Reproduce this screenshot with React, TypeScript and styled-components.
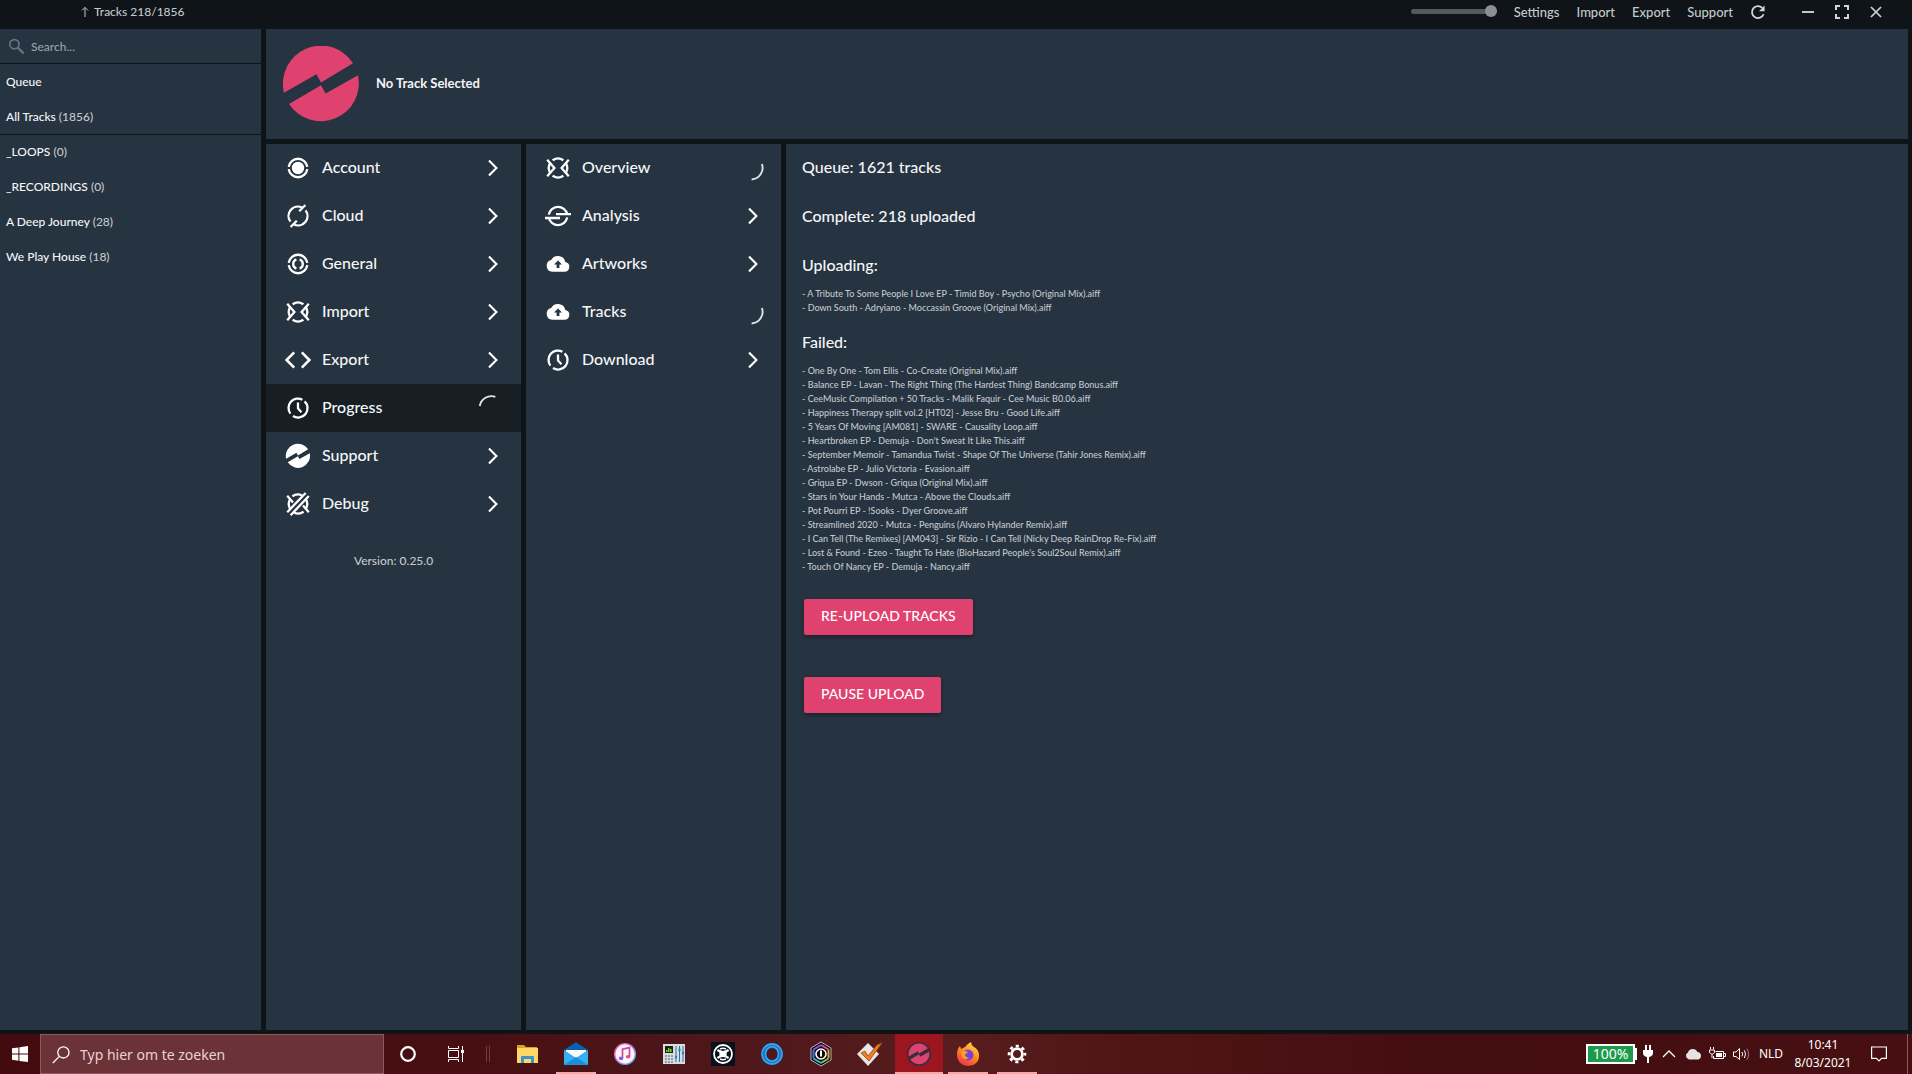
import React from "react";
import styled, { createGlobalStyle, css } from "styled-components";

const color = {
  shell: "#0f1418",
  panel: "#263340",
  active: "#171e24",
  pink: "#df426f",
  text: "#f4f6f8",
  soft: "#c3c8cc",
  muted: "#9aa3aa",
};

const GlobalStyle = createGlobalStyle`
  * { box-sizing: border-box; }
  html, body, #root { height: 100%; }
  body {
    margin: 0;
    background: ${color.shell};
    color: ${color.text};
    font-family: Lato, "Open Sans", sans-serif;
    font-weight: 500;
    overflow: hidden;
  }
  button, input { font-family: inherit; font-weight: inherit; color: inherit; }
  button { border: 0; padding: 0; background: none; }
  ul { list-style: none; margin: 0; padding: 0; }
  h1, h2, p { margin: 0; }
  svg { display: block; flex: none; }
`;

/* ---------- shell ---------- */

const Desktop = styled.div`
  display: flex;
  flex-direction: column;
  height: 100vh;
`;

const TitleBar = styled.header`
  display: flex;
  align-items: center;
  height: 29px;
  flex: none;
  padding: 0 27px 6px 81px;
  color: ${color.soft};
`;

const UploadStatus = styled.p`
  display: flex;
  align-items: center;
  gap: 5px;
  flex: 1;
  font-size: 12px;
  line-height: 16px;
`;

const Volume = styled.input`
  appearance: none;
  width: 86px;
  height: 12px;
  margin: 0 17px 0 0;
  background: transparent;
  &::-webkit-slider-runnable-track {
    height: 5px;
    border-radius: 3px;
    background: #55595d;
  }
  &::-webkit-slider-thumb {
    appearance: none;
    width: 12px;
    height: 12px;
    margin-top: -4px;
    border-radius: 50%;
    background: #8d8f94;
  }
`;

const TopNav = styled.nav`
  display: flex;
  gap: 17px;
  margin-right: 16px;
`;

const TopLink = styled.a`
  color: inherit;
  text-decoration: none;
  font-size: 13px;
  line-height: 18px;
`;

const WindowButtons = styled.div`
  display: flex;
  gap: 16px;
  margin-left: 32px;
`;

const TitleButton = styled.button`
  display: grid;
  place-items: center;
  width: 18px;
  height: 18px;
`;

const Workspace = styled.div`
  display: grid;
  grid-template-columns: 261px minmax(0, 1fr);
  gap: 5px;
  flex: 1;
  min-height: 0;
  padding: 0 4px 4px 0;
`;

/* ---------- sidebar ---------- */

const Sidebar = styled.aside`
  background: ${color.panel};
`;

const SearchRow = styled.label`
  display: flex;
  align-items: center;
  gap: 6px;
  height: 35px;
  padding: 1px 8px 0;
  border-bottom: 1px solid ${color.shell};
`;

const SearchInput = styled.input`
  flex: 1;
  min-width: 0;
  border: 0;
  padding: 0;
  outline: 0;
  background: transparent;
  font-size: 12px;
  line-height: 16px;
  &::placeholder { color: ${color.muted}; opacity: 1; }
`;

const PlaylistGroup = styled.ul`
  & + & { box-shadow: inset 0 1px 0 ${color.shell}; }
`;

const Playlist = styled.button`
  display: block;
  width: 100%;
  height: 35px;
  padding: 0 6px;
  text-align: left;
  font-size: 12px;
  line-height: 35px;
`;

const Count = styled.span`
  color: ${color.soft};
`;

/* ---------- main area ---------- */

const Main = styled.main`
  display: grid;
  grid-template-rows: 110px minmax(0, 1fr);
  gap: 5px;
  min-height: 0;
`;

const Player = styled.section`
  display: flex;
  align-items: center;
  gap: 17px;
  padding: 0 17px;
  background: ${color.panel};
`;

const TrackTitle = styled.h1`
  padding-bottom: 2px;
  font-size: 13px;
  line-height: 18px;
  font-weight: 700;
`;

const Columns = styled.div`
  display: grid;
  grid-template-columns: 255px 255px minmax(0, 1fr);
  gap: 5px;
  min-height: 0;
`;

const MenuColumn = styled.nav`
  background: ${color.panel};
`;

const MenuItem = styled.button<{ $active?: boolean }>`
  display: flex;
  align-items: center;
  width: 100%;
  height: 48px;
  padding: 0 17px 0 19px;
  text-align: left;
  font-size: 16px;
  line-height: 24px;
  ${(p) => p.$active && css`background: ${color.active};`}
`;

const MenuLabel = styled.span`
  flex: 1;
  padding: 0 0 2px 11px;
`;

const Version = styled.p`
  padding-top: 25px;
  text-align: center;
  font-size: 12px;
  line-height: 16px;
  color: ${color.soft};
`;

const Detail = styled.section`
  display: flex;
  flex-direction: column;
  align-items: flex-start;
  padding: 11px 16px;
  background: ${color.panel};
`;

const Heading = styled.h2`
  font-size: 16px;
  line-height: 24px;
  font-weight: 500;
  & + & { margin-top: 25px; }
`;

const FileList = styled.ul`
  margin: 10px 0 15px;
  font-size: 9px;
  line-height: 14px;
  color: ${color.soft};
`;

const ActionButton = styled.button`
  height: 36px;
  margin: 10px 2px 32px;
  padding: 0 17px 2px;
  border-radius: 2px;
  background: ${color.pink};
  color: #fff;
  font-size: 14px;
  line-height: 20px;
  text-transform: uppercase;
  box-shadow: 0 2px 4px rgba(0, 0, 0, 0.35);
`;

/* ---------- taskbar ---------- */

const Taskbar = styled.footer`
  display: flex;
  align-items: center;
  height: 40px;
  flex: none;
  color: #fff;
  font-family: "Noto Sans", "Open Sans", sans-serif;
  font-weight: 400;
  background: linear-gradient(90deg, #430b0d 0%, #470f11 24%, #4e1719 38%, #571d1f 50%, #511517 58%, #430e10 75%, #470f11 100%);
`;

const TaskSearch = styled.label`
  display: flex;
  align-items: center;
  gap: 10px;
  width: 344px;
  height: 40px;
  padding: 1px 11px 0;
  border: 1px solid #8c5b5e;
  background: #6b3237;
`;

const TaskSearchInput = styled.input`
  flex: 1;
  min-width: 0;
  padding: 0;
  border: 0;
  outline: 0;
  background: transparent;
  font-size: 14px;
  line-height: 20px;
  &::placeholder { color: #e9d2d3; opacity: 1; }
`;

const TaskButton = styled.button<{ $width?: number; $open?: boolean; $current?: boolean }>`
  display: grid;
  place-items: center;
  width: ${(p) => p.$width ?? 48}px;
  height: 40px;
  ${(p) => p.$open && css`
    background: linear-gradient(#fca5a8, #fca5a8) center bottom / 40px 2px no-repeat;
  `}
  ${(p) => p.$current && css`
    background: linear-gradient(#fca5a8, #fca5a8) center bottom / 48px 2px no-repeat, #9c1620;
  `}
`;

const Divider = styled.span`
  width: 4px;
  height: 16px;
  margin: 0 13px 0 6px;
  border: solid #6d3f41;
  border-width: 0 1px;
`;

const Apps = styled.div`
  display: flex;
  flex: 1;
  gap: 1px;
`;

const Battery = styled.span`
  display: grid;
  place-items: center;
  width: 49px;
  height: 20px;
  border: 2px solid #fff;
  background: #1d9a4b;
  font-size: 14px;
  line-height: 16px;
`;

const BatteryTip = styled.span`
  width: 2px;
  height: 12px;
  margin-right: 6px;
  background: #fff;
`;

const Tray = styled.div`
  display: flex;
  align-items: center;
  gap: 7px;
  margin-right: 2px;
`;

const Language = styled.button`
  width: 28px;
  font-size: 12px;
  line-height: 16px;
`;

const Clock = styled.time`
  width: 72px;
  font-size: 12px;
  line-height: 18px;
  text-align: center;
`;

const Notifications = styled(TaskButton)`
  margin: 0 4px 0 -4px;
`;

const ShowDesktop = styled.button`
  width: 5px;
  height: 40px;
  border-left: 1px solid #8c5b5e;
`;

/* ---------- drawings ---------- */

const Logo = ({ size, fill }: { size: number; fill: string }) => (
  <svg width={size} height={size} viewBox="0 0 76 76" fill={fill} aria-hidden="true">
    <path d="M70 17.3 38 36.5 33.4 28.3 1 46.7A38 38 0 0 1 70 17.3Z" />
    <path d="M75 29.3 42.6 47.5 38 39.2 6 58A38 38 0 0 0 75 29.3Z" />
  </svg>
);

const Glyph = ({ children, size = 26 }: { children: React.ReactNode; size?: number }) => (
  <svg
    width={size}
    height={size}
    viewBox="0 0 26 26"
    fill="none"
    stroke="#fff"
    strokeWidth="2.3"
    aria-hidden="true"
  >
    {children}
  </svg>
);

const splitRing = "M3.7 11.8A9.4 9.4 0 0 1 22.3 11.8M3.7 14.2A9.4 9.4 0 0 0 22.3 14.2";
const crossed = (
  <>
    <path d="M7.6 5.2A9.4 9.4 0 0 1 18.4 5.2M7.6 20.8A9.4 9.4 0 0 0 18.4 20.8" />
    <path d="M2.2 4.8 9.4 13 2.2 21.2M23.8 4.8 16.6 13 23.8 21.2" />
    <path d="M5 8.4A9.4 9.4 0 0 0 5 17.6M21 8.4A9.4 9.4 0 0 1 21 17.6" />
  </>
);

const glyphs = {
  account: (
    <Glyph>
      <path d={splitRing} />
      <circle cx="13" cy="13" r="6.2" fill="#fff" stroke="none" />
    </Glyph>
  ),
  cloud: (
    <Glyph>
      <path d="M5.4 18.6A9.4 9.4 0 0 1 17 4.5M9 21.5A9.4 9.4 0 0 0 20.6 7.4" />
      <path d="M20.4 2 14.2 8.2M5.6 24 11.8 17.8" />
    </Glyph>
  ),
  general: (
    <Glyph>
      <path d={splitRing} />
      <path d="M11.4 8.4A4.9 4.9 0 0 0 11.4 17.6M14.6 8.4A4.9 4.9 0 0 1 14.6 17.6" />
    </Glyph>
  ),
  exchange: <Glyph>{crossed}</Glyph>,
  code: (
    <Glyph>
      <path d="M9.2 5.4 1.6 13 9.2 20.6M16.8 5.4 24.4 13 16.8 20.6" strokeWidth="2.5" />
    </Glyph>
  ),
  clock: (
    <Glyph>
      <path d="M5.4 18.6A9.4 9.4 0 0 1 17.4 4.7M19.6 6.3A9.4 9.4 0 0 1 8 21" />
      <path d="M13 7.4V13.4L16.4 17.2" />
    </Glyph>
  ),
  support: (
    <Glyph>
      <g transform="translate(.8 .8) scale(.32)" fill="#fff" stroke="none">
        <path d="M70 17.3 38 36.5 33.4 28.3 1 46.7A38 38 0 0 1 70 17.3Z" />
        <path d="M75 29.3 42.6 47.5 38 39.2 6 58A38 38 0 0 0 75 29.3Z" />
      </g>
    </Glyph>
  ),
  debug: (
    <Glyph>
      <path d="M7.4 5.2A9.4 9.4 0 0 1 17 4.5M9 21.5A9.4 9.4 0 0 0 18.6 20.8" />
      <path d="M5 8.4A9.4 9.4 0 0 0 5 17.6M21 8.4A9.4 9.4 0 0 1 21 17.6" />
      <path d="M2.2 4.8 8 11.4M2.2 21.2 20.6 2M5.6 24.2 23.8 5M18 14.6 23.8 21.2" />
    </Glyph>
  ),
  analysis: (
    <Glyph>
      <path d="M3.8 11.6A9.4 9.4 0 0 1 22.2 11.2M22.2 14.4A9.4 9.4 0 0 1 3.8 14.8" />
      <path d="M11 11.2H26M0 15H15" />
    </Glyph>
  ),
  upload: (
    <Glyph>
      <path
        d="M20.3 10.9A7.6 7.6 0 0 0 6.2 9 6 6 0 0 0 7.2 20.8H19.4A5 5 0 0 0 20.3 10.9Z"
        fill="#fff"
        stroke="none"
      />
      <path d="M13 9.4 17 13.6H14.4V17H11.6V13.6H9Z" fill={color.panel} stroke="none" />
    </Glyph>
  ),
};

const Chevron = () => (
  <svg width="26" height="26" viewBox="0 0 26 26" fill="none" stroke="#fff" strokeWidth="2.1" aria-hidden="true">
    <path d="M11 5.4 18.4 13 11 20.6" />
  </svg>
);

const Spinner = ({ turned }: { turned?: boolean }) => (
  <svg width="26" height="26" viewBox="0 0 26 26" fill="none" stroke="#dfe3e6" strokeWidth="1.9" aria-hidden="true">
    <path d={turned ? "M23.9 9A11.6 11.6 0 0 1 13.6 24.5" : "M1.8 11A11.6 11.6 0 0 1 17.4 1.9"} />
  </svg>
);

const SearchIcon = () => (
  <svg width="17" height="17" viewBox="0 0 17 17" fill="none" stroke="#6c747b" aria-hidden="true">
    <circle cx="6.4" cy="6.2" r="4.6" strokeWidth="1.7" />
    <path d="M9.8 9.6 15.6 15.4" strokeWidth="2.2" />
  </svg>
);

/* ---------- taskbar icons ---------- */

const taskIcons = {
  explorer: (
    <svg width="24" height="24" viewBox="0 0 24 24">
      <path d="M2 3H9L11 5H22V9H2Z" fill="#e0a11f" />
      <path d="M2 6H23V21H2Z" fill="#ffd767" />
      <path d="M6 21V15Q6 14 7 14H18Q19 14 19 15V21H16V17H9V21Z" fill="#3f93cc" />
    </svg>
  ),
  mail: (
    <svg width="24" height="26" viewBox="0 0 24 26">
      <path d="M0 9 12 1 24 9V13H0Z" fill="#0b5fb0" />
      <path d="M2 9H22V17H2Z" fill="#f6f9fc" />
      <path d="M0 9 12 17 24 9V24H0Z" fill="#35b2ee" />
      <path d="M0 24 12 16 24 24Z" fill="#1e8ddb" />
    </svg>
  ),
  music: (
    <svg width="24" height="24" viewBox="0 0 24 24">
      <defs>
        <linearGradient id="ring" x1="0" y1="0" x2="1" y2="1">
          <stop offset="0" stopColor="#f5589b" />
          <stop offset="0.5" stopColor="#b56bdc" />
          <stop offset="1" stopColor="#4bb8f0" />
        </linearGradient>
      </defs>
      <circle cx="12" cy="12" r="10.4" fill="#faf5fb" stroke="url(#ring)" strokeWidth="1.4" />
      <path d="M9.5 16.2V7.2L16.5 5.6V14.6" fill="none" stroke="#d0469f" strokeWidth="1.7" />
      <ellipse cx="8" cy="16.4" rx="2.2" ry="1.8" fill="#8a5be0" />
      <ellipse cx="15" cy="14.8" rx="2.2" ry="1.8" fill="#ee4b86" />
    </svg>
  ),
  mixer: (
    <svg width="24" height="24" viewBox="0 0 24 24">
      <path d="M1 2H23V22H1Z" fill="#d7dde2" />
      <path d="M3 4H11V11H3Z" fill="#17240f" />
      <path d="M4 10V8H5.5V10M6 10V6H7.5V10M8 10V7H9.5V10" fill="#7ed321" />
      <path d="M3 14H11M3 17H11M3 20H11" stroke="#7c8890" strokeWidth="1.6" strokeDasharray="2 1" />
      <path d="M14 4V20M17.5 4V20M21 4V20" stroke="#2f6f9e" />
      <path d="M13 15H15M16.5 8H18.5M20 11H22" stroke="#1583c6" strokeWidth="2.6" />
    </svg>
  ),
  deck: (
    <svg width="24" height="24" viewBox="0 0 24 24">
      <path d="M0 0H24V24H0Z" fill="#07101d" />
      <g fill="none" stroke="#fff">
        <circle cx="12" cy="12" r="9" strokeWidth="1.8" />
        <path d="M6.4 8Q12 12 17.6 8M6.4 16Q12 12 17.6 16" strokeWidth="2.2" />
        <path d="M9 7Q12 5.6 15 7M9 17Q12 18.4 15 17" strokeWidth="1.4" />
      </g>
      <path d="M8.4 9.6H15.6V14.4H8.4Z" fill="#fff" />
    </svg>
  ),
  ring: (
    <svg width="24" height="24" viewBox="0 0 24 24" fill="none">
      <ellipse cx="12" cy="12" rx="8.4" ry="8.6" stroke="#1877c9" strokeWidth="5" />
      <circle cx="12" cy="12" r="10" stroke="#38a8f2" strokeWidth="1.4" />
      <ellipse cx="12" cy="12" rx="6.4" ry="7.4" stroke="#3db0f5" strokeWidth="1.2" />
    </svg>
  ),
  hex: (
    <svg width="24" height="26" viewBox="0 0 24 26" fill="none">
      <path d="M12 1 22 7V19L12 25 2 19V7Z" fill="#0b0b0e" stroke="#b9b9bd" />
      <path d="M12 4 19.5 8.5" stroke="#e9489c" strokeWidth="2" />
      <path d="M19.5 8.5V17.5" stroke="#f1a32b" strokeWidth="2" />
      <path d="M19.5 17.5 12 22" stroke="#7ccf43" strokeWidth="2" />
      <path d="M12 22 4.5 17.5" stroke="#2cc1c9" strokeWidth="2" />
      <path d="M4.5 17.5V8.5" stroke="#3c72e6" strokeWidth="2" />
      <path d="M4.5 8.5 12 4" stroke="#a34be0" strokeWidth="2" />
      <circle cx="12" cy="13" r="5" fill="#0b0b0e" stroke="#fff" strokeWidth="1.6" />
      <path d="M12 9.6V15.6" stroke="#fff" strokeWidth="2" />
    </svg>
  ),
  check: (
    <svg width="26" height="26" viewBox="0 0 26 26">
      <path d="M11 2 22 13 11 25 0 13Z" fill="#e4e6e8" />
      <path d="M4 12 8 10 11 15 20 4 25 2 12 20Z" fill="#f07d1c" stroke="#a8440d" strokeWidth="0.8" />
    </svg>
  ),
  logo: (
    <svg width="24" height="24" viewBox="0 0 76 76">
      <circle cx="38" cy="38" r="38" fill="#3b2c3b" />
      <g fill="#dc4370" transform="translate(5 5) scale(.87)">
        <path d="M70 17.3 38 36.5 33.4 28.3 1 46.7A38 38 0 0 1 70 17.3Z" />
        <path d="M75 29.3 42.6 47.5 38 39.2 6 58A38 38 0 0 0 75 29.3Z" />
      </g>
    </svg>
  ),
  fox: (
    <svg width="24" height="26" viewBox="0 0 24 26">
      <defs>
        <linearGradient id="flame" x1="0.8" y1="0" x2="0.3" y2="1">
          <stop offset="0" stopColor="#ffe14a" />
          <stop offset="0.5" stopColor="#ff8a1e" />
          <stop offset="1" stopColor="#f0304f" />
        </linearGradient>
      </defs>
      <path
        d="M15 1Q15 4 18 6 22 8 23 13 24 24 12 25 1 24 1 13 1 8 4 5L5 8 9 6Q11 3 15 1Z"
        fill="url(#flame)"
      />
      <circle cx="12" cy="14" r="5.4" fill="#7542d5" />
      <path d="M5 11Q8 9 12 11 11 13 9 13 9 16 13 17 9 20 6 16Z" fill="#ff9a22" />
    </svg>
  ),
  gear: (
    <svg width="20" height="20" viewBox="0 0 20 20" fill="none" stroke="#fff">
      <circle cx="10" cy="10" r="5.4" strokeWidth="2.8" />
      <circle cx="10" cy="10" r="8" strokeWidth="2.6" strokeDasharray="3.14 3.14" strokeDashoffset="1.5" />
    </svg>
  ),
};

type GlyphName = keyof typeof glyphs;
type Entry = { label: string; icon: GlyphName; busy?: boolean; active?: boolean };

const settingsMenu: Entry[] = [
  { label: "Account", icon: "account" },
  { label: "Cloud", icon: "cloud" },
  { label: "General", icon: "general" },
  { label: "Import", icon: "exchange" },
  { label: "Export", icon: "code" },
  { label: "Progress", icon: "clock", busy: true, active: true },
  { label: "Support", icon: "support" },
  { label: "Debug", icon: "debug" },
];

const progressMenu: Entry[] = [
  { label: "Overview", icon: "exchange", busy: true },
  { label: "Analysis", icon: "analysis" },
  { label: "Artworks", icon: "upload" },
  { label: "Tracks", icon: "upload", busy: true },
  { label: "Download", icon: "clock" },
];

const library = [{ name: "Queue" }, { name: "All Tracks", count: 1856 }];
const playlists = [
  { name: "_LOOPS", count: 0 },
  { name: "_RECORDINGS", count: 0 },
  { name: "A Deep Journey", count: 28 },
  { name: "We Play House", count: 18 },
];

const uploading = [
  "A Tribute To Some People I Love EP - Timid Boy - Psycho (Original Mix).aiff",
  "Down South - Adryiano - Moccassin Groove (Original Mix).aiff",
];

const failed = [
  "One By One - Tom Ellis - Co-Create (Original Mix).aiff",
  "Balance EP - Lavan - The Right Thing (The Hardest Thing) Bandcamp Bonus.aiff",
  "CeeMusic Compilation + 50 Tracks - Malik Faquir - Cee Music B0.06.aiff",
  "Happiness Therapy split vol.2 [HT02] - Jesse Bru - Good Life.aiff",
  "5 Years Of Moving [AM081] - SWARE - Causality Loop.aiff",
  "Heartbroken EP - Demuja - Don't Sweat It Like This.aiff",
  "September Memoir - Tamandua Twist - Shape Of The Universe (Tahir Jones Remix).aiff",
  "Astrolabe EP - Julio Victoria - Evasion.aiff",
  "Griqua EP - Dwson - Griqua (Original Mix).aiff",
  "Stars in Your Hands - Mutca - Above the Clouds.aiff",
  "Pot Pourri EP - !Sooks - Dyer Groove.aiff",
  "Streamlined 2020 - Mutca - Penguins (Alvaro Hylander Remix).aiff",
  "I Can Tell (The Remixes) [AM043] - Sir Rizio - I Can Tell (Nicky Deep RainDrop Re-Fix).aiff",
  "Lost & Found - Ezeo - Taught To Hate (BioHazard People's Soul2Soul Remix).aiff",
  "Touch Of Nancy EP - Demuja - Nancy.aiff",
];

const apps: { icon: keyof typeof taskIcons; label: string; open?: boolean; current?: boolean }[] = [
  { icon: "explorer", label: "File Explorer" },
  { icon: "mail", label: "Mail", open: true },
  { icon: "music", label: "iTunes" },
  { icon: "mixer", label: "Mixer" },
  { icon: "deck", label: "Traktor" },
  { icon: "ring", label: "Rekordbox" },
  { icon: "hex", label: "Mixed In Key" },
  { icon: "check", label: "Tasks" },
  { icon: "logo", label: "Music library", current: true },
  { icon: "fox", label: "Firefox", open: true },
  { icon: "gear", label: "Settings", open: true },
];

const Menu = ({ items, turned }: { items: Entry[]; turned?: boolean }) => (
  <>
    {items.map((item) => (
      <MenuItem key={item.label} $active={item.active}>
        {glyphs[item.icon]}
        <MenuLabel>{item.label}</MenuLabel>
        {item.busy ? <Spinner turned={turned} /> : <Chevron />}
      </MenuItem>
    ))}
  </>
);

const Playlists = ({ items }: { items: { name: string; count?: number }[] }) => (
  <PlaylistGroup>
    {items.map((item) => (
      <li key={item.name}>
        <Playlist>
          {item.name} {item.count !== undefined && <Count>({item.count})</Count>}
        </Playlist>
      </li>
    ))}
  </PlaylistGroup>
);

const Files = ({ items }: { items: string[] }) => (
  <FileList>
    {items.map((name) => (
      <li key={name}>- {name}</li>
    ))}
  </FileList>
);

export default function App() {
  return (
    <Desktop>
      <GlobalStyle />
      <TitleBar>
        <UploadStatus>
          <svg width="8" height="12" viewBox="0 0 8 12" fill="none" stroke="#c3c8cc" aria-hidden="true">
            <path d="M4 11V1.6M1 4.4 4 1.4 7 4.4" />
          </svg>
          Tracks 218/1856
        </UploadStatus>
        <Volume type="range" aria-label="Volume" min={0} max={100} defaultValue={100} />
        <TopNav>
          {["Settings", "Import", "Export", "Support"].map((label) => (
            <TopLink href="#" key={label}>{label}</TopLink>
          ))}
        </TopNav>
        <TitleButton aria-label="Refresh">
          <svg width="18" height="18" viewBox="0 0 18 18" fill="none" stroke="#d3d6d9" strokeWidth="1.8">
            <path d="M14.6 11.2A6 6 0 1 1 13.4 5" />
            <path d="M15.6 2.6V8.2H10Z" fill="#d3d6d9" stroke="none" />
          </svg>
        </TitleButton>
        <WindowButtons>
          <TitleButton aria-label="Minimize">
            <svg width="18" height="18" viewBox="0 0 18 18" stroke="#c3c8cc" strokeWidth="2">
              <path d="M3 9H15" />
            </svg>
          </TitleButton>
          <TitleButton aria-label="Fullscreen">
            <svg width="18" height="18" viewBox="0 0 18 18" fill="none" stroke="#d3d6d9" strokeWidth="2">
              <path d="M3 7V3H7M11 3H15V7M15 11V15H11M7 15H3V11" />
            </svg>
          </TitleButton>
          <TitleButton aria-label="Close">
            <svg width="18" height="18" viewBox="0 0 18 18" stroke="#d3d6d9" strokeWidth="1.7">
              <path d="M4 4 14 14M14 4 4 14" />
            </svg>
          </TitleButton>
        </WindowButtons>
      </TitleBar>

      <Workspace>
        <Sidebar>
          <SearchRow>
            <SearchIcon />
            <SearchInput type="text" aria-label="Search" placeholder="Search..." />
          </SearchRow>
          <Playlists items={library} />
          <Playlists items={playlists} />
        </Sidebar>

        <Main>
          <Player>
            <Logo size={76} fill={color.pink} />
            <TrackTitle>No Track Selected</TrackTitle>
          </Player>
          <Columns>
            <MenuColumn aria-label="Settings">
              <Menu items={settingsMenu} />
              <Version>Version: 0.25.0</Version>
            </MenuColumn>
            <MenuColumn aria-label="Progress">
              <Menu items={progressMenu} turned />
            </MenuColumn>
            <Detail>
              <Heading>Queue: 1621 tracks</Heading>
              <Heading>Complete: 218 uploaded</Heading>
              <Heading>Uploading:</Heading>
              <Files items={uploading} />
              <Heading>Failed:</Heading>
              <Files items={failed} />
              <ActionButton>Re-upload tracks</ActionButton>
              <ActionButton>Pause upload</ActionButton>
            </Detail>
          </Columns>
        </Main>
      </Workspace>

      <Taskbar>
        <TaskButton $width={40} aria-label="Start">
          <svg width="16" height="16" viewBox="0 0 16 16" fill="#fff">
            <path d="M0 2.3 6.4 1.4V7.6H0ZM7.4 1.2 16 0V7.6H7.4ZM0 8.5H6.4V14.7L0 13.8ZM7.4 8.5H16V16L7.4 14.9Z" />
          </svg>
        </TaskButton>
        <TaskSearch>
          <svg width="18" height="18" viewBox="0 0 18 18" fill="none" stroke="#fff" strokeWidth="1.3" aria-hidden="true">
            <circle cx="11.4" cy="6.4" r="5.6" />
            <path d="M7.4 10.4 0.8 17" />
          </svg>
          <TaskSearchInput type="text" aria-label="Typ hier om te zoeken" placeholder="Typ hier om te zoeken" />
        </TaskSearch>
        <TaskButton aria-label="Cortana">
          <svg width="18" height="18" viewBox="0 0 18 18" fill="none" stroke="#fff" strokeWidth="2.2">
            <circle cx="9" cy="9" r="6.8" />
          </svg>
        </TaskButton>
        <TaskButton aria-label="Task view">
          <svg width="16" height="16" viewBox="0 0 16 16" fill="none" stroke="#fff">
            <path d="M0.5 0V2.5H10.5V0M0.5 16V13.5H10.5V16M0.5 4.5H10.5V11.5H0.5ZM14.5 0V16" />
            <path d="M13 4H16V7H13Z" fill="#fff" stroke="none" />
          </svg>
        </TaskButton>
        <Divider />
        <Apps>
          {apps.map((app) => (
            <TaskButton key={app.icon} aria-label={app.label} $open={app.open} $current={app.current}>
              {taskIcons[app.icon]}
            </TaskButton>
          ))}
        </Apps>
        <Battery>100%</Battery>
        <BatteryTip />
        <Tray>
          <svg width="10" height="18" viewBox="0 0 10 18" fill="#fff">
            <path d="M2 0H4V5H6V0H8V5H10V8Q10 11 6 12V18H4V12Q0 11 0 8V5H2Z" />
          </svg>
          <TitleButton aria-label="Show hidden icons">
            <svg width="14" height="8" viewBox="0 0 14 8" fill="none" stroke="#fff" strokeWidth="1.3">
              <path d="M1 7 7 1 13 7" />
            </svg>
          </TitleButton>
          <svg width="17" height="12" viewBox="0 0 17 12" fill="#e8e3e3">
            <path d="M4 11.4A3.6 3.6 0 0 1 3 4.6 5 5 0 0 1 12.4 4 3.8 3.8 0 0 1 13.4 11.4Z" />
          </svg>
          <svg width="17" height="14" viewBox="0 0 17 14" fill="none" stroke="#fff">
            <path d="M6.5 4.5H14.5V11.5H4.5V9M15 6.5H16.5V9.5H15" />
            <path d="M7 6H13V10H7Z" fill="#fff" stroke="none" />
            <path d="M1.5 0V2.5M4.5 0V2.5M0.5 3H5.5V5.5L3 7.5 0.5 5.5ZM3 7.5V11" />
          </svg>
          <svg width="17" height="14" viewBox="0 0 17 14" fill="none" stroke="#fff">
            <path d="M0.5 5V9.5H3L6.5 12.5V1.5L3 5Z" />
            <path d="M9 5Q10.2 7 9 9.4M11.4 3.4Q13.6 7 11.4 11" />
            <path d="M13.8 1.6Q17.4 7 13.8 12.8" stroke="#a5797b" />
          </svg>
          <Language>NLD</Language>
        </Tray>
        <Clock>10:41<br />8/03/2021</Clock>
        <Notifications aria-label="Notifications">
          <svg width="16" height="16" viewBox="0 0 16 16" fill="none" stroke="#fff" strokeWidth="1.2">
            <path d="M0.6 1H15.4V12.4H10.6L8 15 5.4 12.4H0.6Z" />
          </svg>
        </Notifications>
        <ShowDesktop aria-label="Show desktop" />
      </Taskbar>
    </Desktop>
  );
}
